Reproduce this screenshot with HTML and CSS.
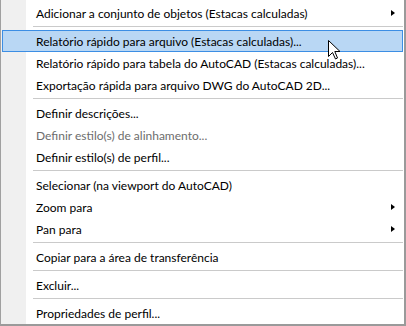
FILE: index.html
```html
<!DOCTYPE html>
<html lang="pt">
<head>
    <meta charset="UTF-8">
    <title>Menu de perfil</title>
    <link rel="stylesheet" href="styles.css">
</head>
<body>

    <div class="menu">
        <div class="item">Adicionar a conjunto de objetos (Estacas calculadas)<span class="arrow"></span></div>
        <div class="sep"></div>
        <div class="item active">Relatório rápido para arquivo (Estacas calculadas)...</div>
        <div class="item">Relatório rápido para tabela do AutoCAD (Estacas calculadas)...</div>
        <div class="item">Exportação rápida para arquivo DWG do AutoCAD 2D...</div>
        <div class="sep"></div>
        <div class="item">Definir descrições...</div>
        <div class="item disabled">Definir estilo(s) de alinhamento...</div>
        <div class="item">Definir estilo(s) de perfil...</div>
        <div class="sep"></div>
        <div class="item">Selecionar (na viewport do AutoCAD)</div>
        <div class="item">Zoom para<span class="arrow"></span></div>
        <div class="item">Pan para<span class="arrow"></span></div>
        <div class="sep"></div>
        <div class="item">Copiar para a área de transferência</div>
        <div class="sep"></div>
        <div class="item">Excluir...</div>
        <div class="sep"></div>
        <div class="item">Propriedades de perfil...</div>

        <svg class="cursor" width="13" height="20" viewBox="0 0 13 20">
            <path d="M0.5 0.5 L0.5 16.5 L4.5 12.5 L7.5 19 L9.5 18 L6.8 11.5 L12 11.5 Z" fill="#fff" stroke="#000" stroke-width="1"/>
        </svg>
    </div>

</body>
</html>
```

FILE: styles.css
```css
/* Page */
body {
    margin: 0;
    background-color: #fff;
    font-family: Lato, "Noto Sans", sans-serif;
    font-size: 12px;
}

/* Context menu */
.menu {
    position: relative;
    width: 406px;
    height: 326px;
    padding-top: 2px;
    box-sizing: border-box;
    border-left: 1px solid #a0a0a0;
    border-right: 2px solid #9a9a9a;
    border-bottom: 2px solid #9a9a9a;
    background: linear-gradient(to right, #f0f0f0 25px, #fff 25px);
}

.item {
    display: flex;
    align-items: center;
    height: 22px;
    margin: 0 1px;
    padding-left: 34px;
    padding-right: 8px;
    box-sizing: border-box;
    color: #000;
    white-space: nowrap;
}

.item.active {
    background-color: #b9d7f4;
    border: 1px solid #3c8ee4;
    padding-left: 33px;
}

.item.disabled {
    color: #6d6d6d;
}

/* Submenu triangle */
.arrow {
    margin-left: auto;
    width: 0;
    height: 0;
    border-top: 3.5px solid transparent;
    border-bottom: 3.5px solid transparent;
    border-left: 4px solid #000;
}

/* Separator */
.sep {
    height: 6px;
    margin-left: 32px;
    margin-right: 1px;
    background: linear-gradient(#fff 2px, #cacaca 2px, #cacaca 3px, #fff 3px);
}

/* Mouse pointer */
.cursor {
    position: absolute;
    left: 327px;
    top: 40px;
}
```
